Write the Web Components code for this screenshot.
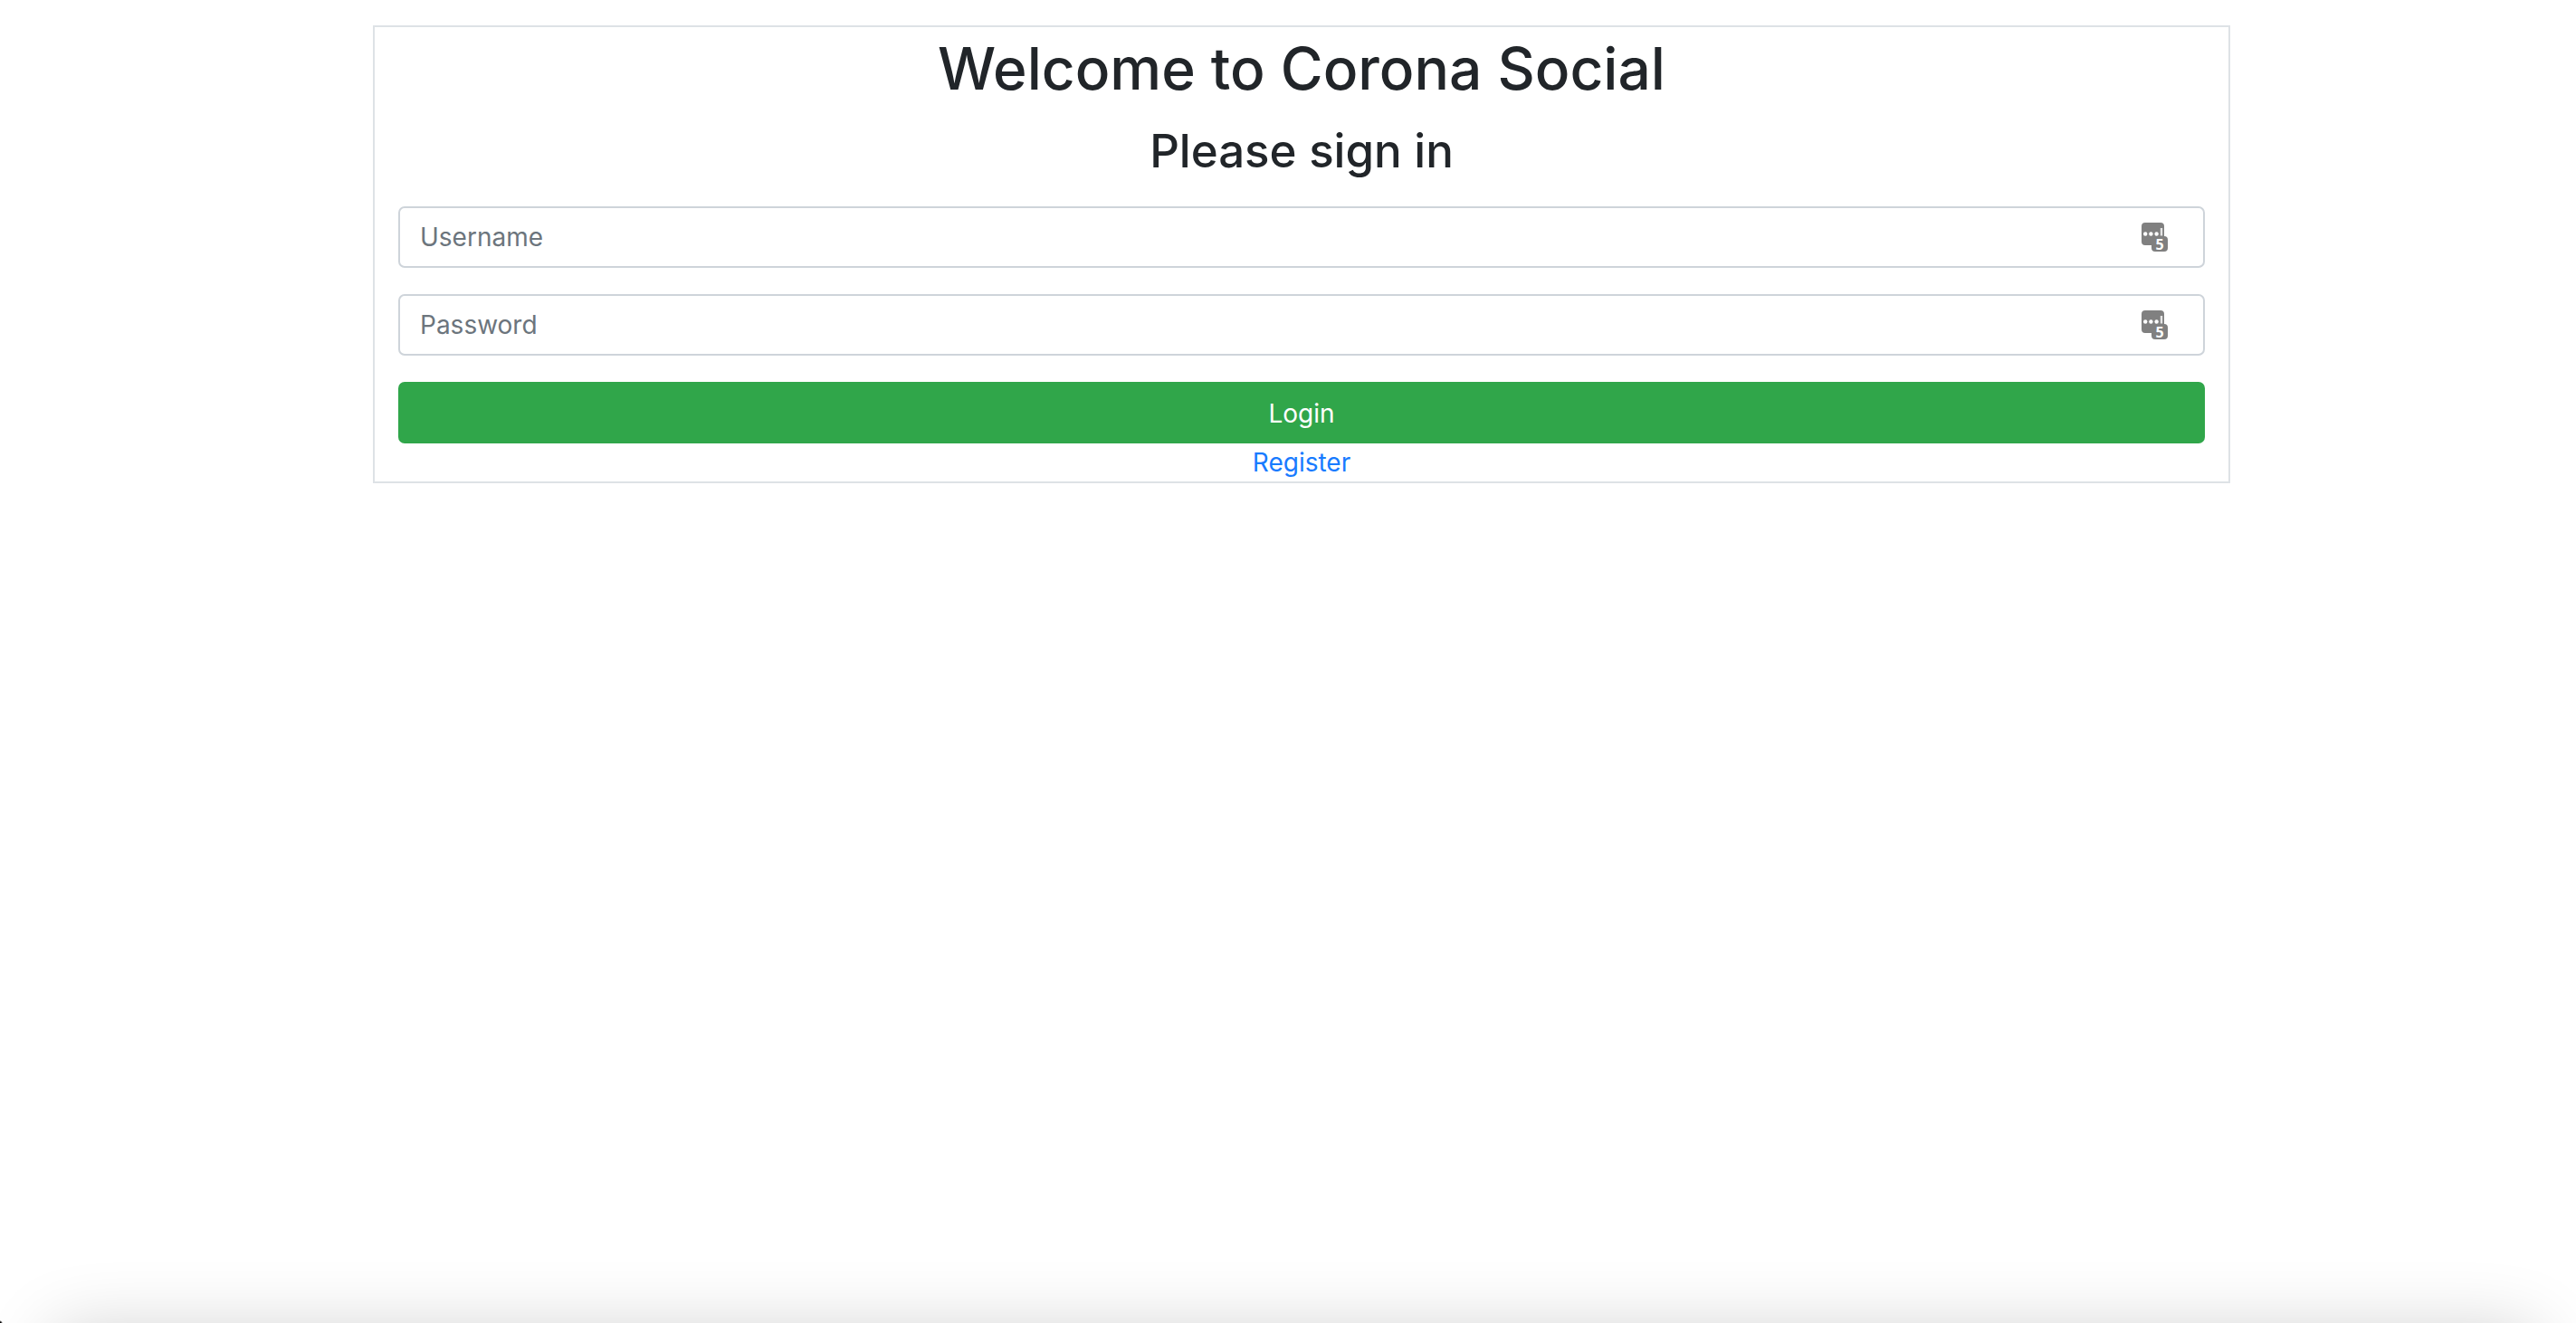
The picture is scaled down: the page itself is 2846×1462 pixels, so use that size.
<!DOCTYPE html>
<html lang="en">
<head>
<meta charset="utf-8">
<title>Corona Social</title>
<style>
  body { margin: 0; background: #fff; color: #212529; font: 400 28px/42px Inter, "Liberation Sans", sans-serif; }
</style>
</head>
<body>
<login-page></login-page>
<window-shade></window-shade>
<script>
class BaseElement extends HTMLElement {
  constructor() {
    super();
    this.attachShadow({ mode: 'open' }).innerHTML = this.render();
  }
  render() { return ''; }
}

class KeyBadge extends BaseElement {
  render() {
    return `
    <style>
      :host { display: block; pointer-events: none; }
      svg { display: block; width: 29px; height: 33px; overflow: visible; }
      text { font: 700 16px "Open Sans", "Noto Sans", sans-serif; }
    </style>
    <svg viewBox="0 0 29 33" aria-hidden="true">
      <path fill="#808080" d="M4 0h17q4 0 4 4v11q4 0 4 4v9q0 4-4 4H15q-4 0-4-4v-3H4q-4 0-4-4V4q0-4 4-4z"/>
      <g fill="#fff"><circle cx="4.2" cy="12.5" r="2.2"/><circle cx="10.4" cy="12.5" r="2.2"/><circle cx="16.6" cy="12.5" r="2.2"/></g>
      <path stroke="#e6e6e6" stroke-width="2.4" d="M22 6v8.500"/>
      <text x="20" y="29.500" text-anchor="middle" fill="#fff">5</text>
    </svg>`;
  }
}
customElements.define('key-badge', KeyBadge);

class TextField extends BaseElement {
  render() {
    return `
    <style>
      :host { display: grid; align-items: center; }
      input, key-badge { grid-area: 1 / 1; }
      input { box-sizing: border-box; width: 100%; height: 68px; margin: 0; padding: 0 92px 0 22px;
        border: 2px solid #ced4da; border-radius: 7px; background: #fff; color: #495057; font: inherit; outline: 0; }
      input::placeholder { color: #6c757d; opacity: 1; }
      input:focus { border-color: #80bdff; }
      key-badge { justify-self: end; margin-right: 41px; }
    </style>
    <input><key-badge></key-badge>`;
  }
  connectedCallback() {
    const input = this.shadowRoot.querySelector('input');
    input.type = this.getAttribute('type') || 'text';
    input.placeholder = this.getAttribute('label');
    input.setAttribute('aria-label', this.getAttribute('label'));
  }
}
customElements.define('text-field', TextField);

class SubmitButton extends BaseElement {
  render() {
    return `
    <style>
      :host { display: block; }
      button { box-sizing: border-box; display: block; width: 100%; height: 68px; margin: 0; padding: 2px 0 0; border: 0;
        border-radius: 7px; background: #30a64a; color: #fff; font: inherit; cursor: pointer; }
    </style>
    <button type="submit"><slot></slot></button>`;
  }
}
customElements.define('submit-button', SubmitButton);

class LoginPage extends BaseElement {
  render() {
    return `
    <style>
      :host { display: block; padding: 28px 0 0 30px; }
      main { box-sizing: border-box; max-width: 2052px; margin: 0 auto; padding: 0 26px;
        border: 2px solid #dee2e6; text-align: center; }
      h1, h2 { margin: 0; font-weight: 500; }
      h1 { font-size: 64px; line-height: 92px; margin-bottom: 8px; }
      h2 { font-size: 51px; line-height: 74px; margin-bottom: 24px; }
      form { display: flex; flex-direction: column; gap: 29px; }
      a { color: #187bff; text-decoration: none; }
      nav { line-height: 42px; }
    </style>
    <main>
      <h1>Welcome to Corona Social</h1>
      <h2>Please sign in</h2>
      <form>
        <text-field label="Username"></text-field>
        <text-field label="Password" type="password"></text-field>
        <submit-button>Login</submit-button>
      </form>
      <nav><a href="#register">Register</a></nav>
    </main>`;
  }
}
customElements.define('login-page', LoginPage);

/* Soft shadow rising from below the window, with the dark tip of its corner. */
class WindowShade extends BaseElement {
  render() {
    return `
    <style>
      :host { position: fixed; left: 0; right: 0; bottom: 0; height: 120px; overflow: hidden; pointer-events: none;
        background: radial-gradient(circle at 0 100%, #000 0, #000 1px, transparent 3px); }
      div { margin: 120px 45px 0 60px; height: 200px; box-shadow: 0 10px 80px rgba(0, 0, 0, .2); }
    </style>
    <div></div>`;
  }
}
customElements.define('window-shade', WindowShade);
</script>
</body>
</html>
